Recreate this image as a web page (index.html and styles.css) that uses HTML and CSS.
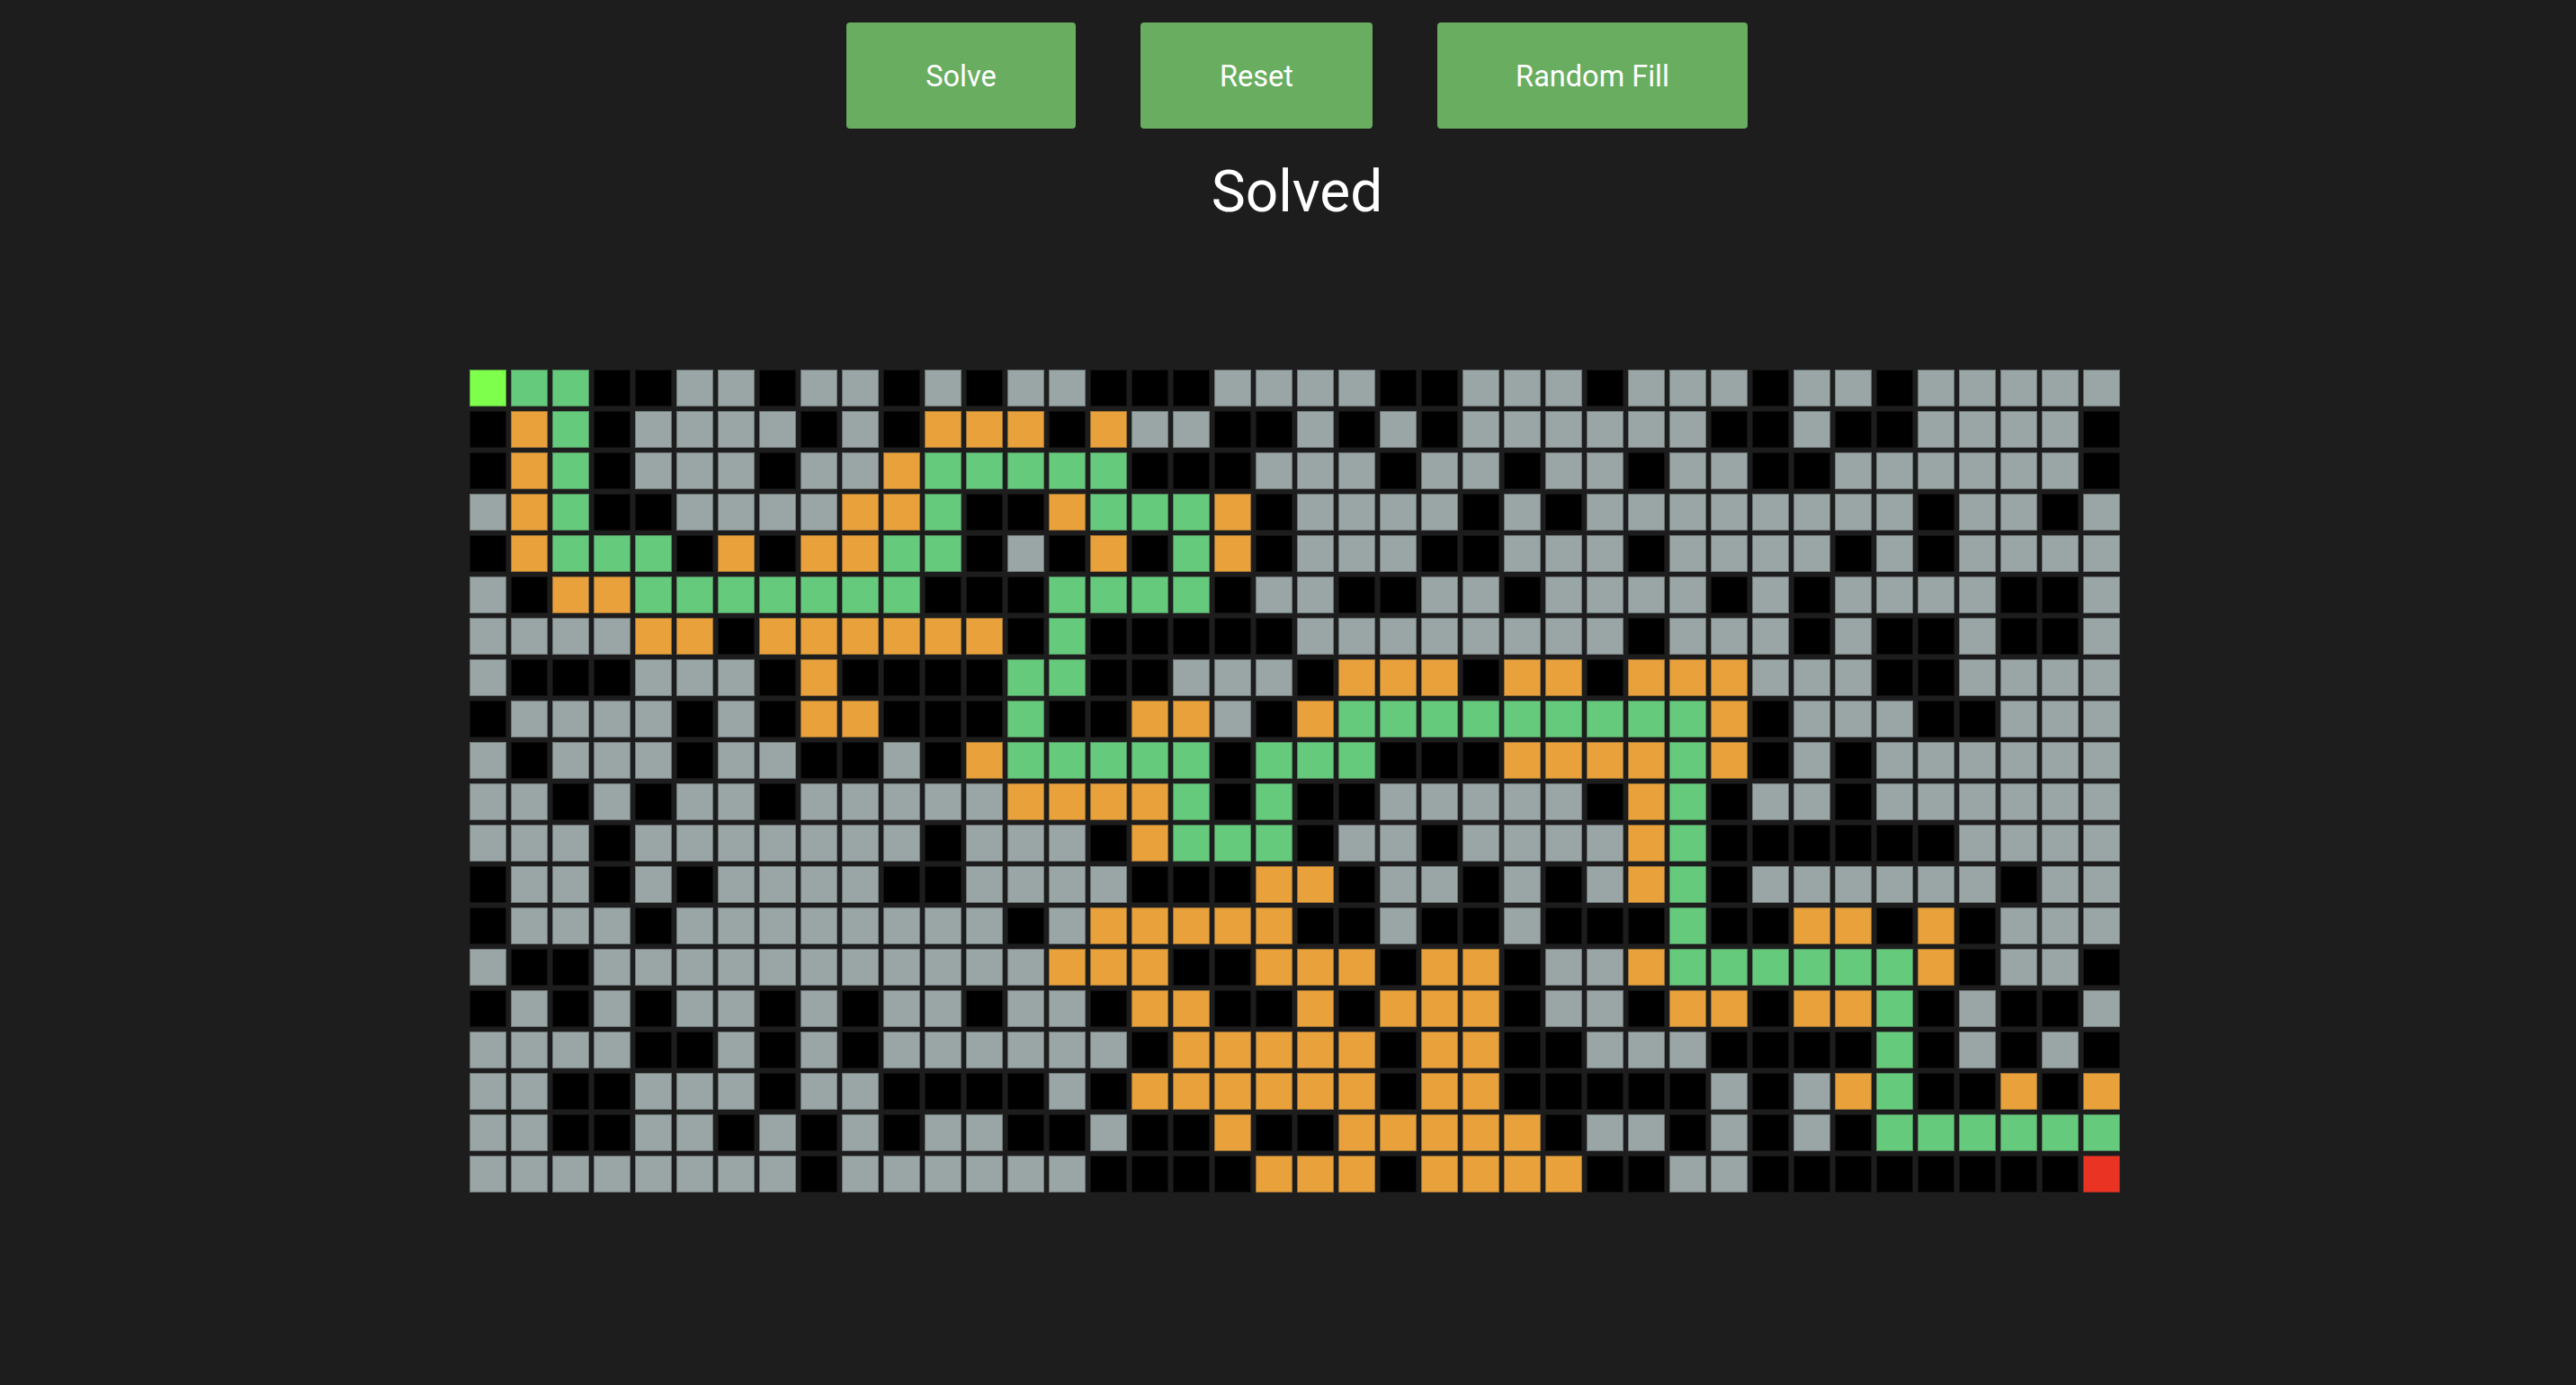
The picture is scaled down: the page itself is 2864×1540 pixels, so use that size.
FILE: index.html
```html
<!DOCTYPE html>
<html lang="en">
<head>
<meta charset="utf-8">
<title>Maze Solver</title>
<link rel="stylesheet" href="styles.css">
</head>
<body>
<main class="app">
  <div class="controls">
    <button class="btn btn-solve">Solve</button>
    <button class="btn btn-reset">Reset</button>
    <button class="btn btn-fill">Random Fill</button>
  </div>
  <h1 class="status">Solved</h1>
  <div class="grid" id="grid"></div>
</main>
<script src="app.js"></script>
</body>
</html>
```

FILE: styles.css
```css
* { box-sizing: border-box; }
html, body { margin: 0; height: 100%; }
body {
  background: #1d1d1d;
  color: #fff;
  font-family: Roboto, "Liberation Sans", sans-serif;
  overflow: hidden;
}
.app {
  display: flex;
  flex-direction: column;
  align-items: center;
  padding-top: 25px;
}
.controls {
  display: flex;
  gap: 72px;
  margin-left: 20px;
}
.btn {
  height: 118px;
  padding: 2px 0 0;
  border: 0;
  border-radius: 4px;
  background: #69ad60;
  color: #fff;
  font: 400 32.5px Roboto, sans-serif;
}
.btn-solve { width: 255px; }
.btn-reset { width: 258px; }
.btn-fill { width: 345px; }
.status {
  margin: 33px 0 0 20px;
  font-weight: 400;
  font-size: 64px;
  line-height: 76px;
}
.grid {
  display: grid;
  grid-template-columns: repeat(40, 41px);
  grid-auto-rows: 41px;
  gap: 5px;
  margin-top: 159px;
  margin-left: 15px;
}
.cell { border: 1px solid rgba(40, 40, 40, 0.4); }
.wall { background: #000; border-color: #111; }
.open { background: #9aa5a6; }
.visited { background: #e8a13b; }
.path { background: #66ca7d; }
.start { background: #7dff4c; }
.end { background: #ea3323; }
```

FILE: app.js
```js
var rows = [
  "SGG..gg.gg.g.gg...gg" + "gg..ggg.ggg.gg.ggggg",
  ".oG.gggg.g.ooo.ogg.." + "g.g.gggggg..g..gggg.",
  ".oG.ggg.ggoGGGGG...g" + "gg.gg.gg.gg..gggggg.",
  "goG..ggggooG..oGGGo." + "gggg.g.gggggggg.gg.g",
  ".oGGG.o.ooGG.g.o.Go." + "ggg..ggg.gggg.g.gggg",
  "g.ooGGGGGGG...GGGG.g" + "g..gg.gggg.g.gggg..g",
  "ggggoo.oooooo.G....." + "gggggggg.ggg.g..g..g",
  "g...ggg.o....GG..ggg" + ".ooo.oo.oooggg..gggg",
  ".gggg.g.oo...G..oog." + "oGGGGGGGGGo.ggg..ggg",
  "g.ggg.gg..g.oGGGGG.G" + "GG...ooooGo.g.gggggg",
  "gg.g.gg.gggggooooG.G" + "..ggggg.oG.gg.gggggg",
  "ggg.ggggggg.ggg.oGGG" + ".gg.ggggoG......gggg",
  ".gg.g.gggg..gggg...o" + "o.gg.g.goG.gggggg.gg",
  ".ggg.gggggggg.gooooo" + "..g..g...G..oo.o.ggg",
  "g..gggggggggggooo..o" + "oo.oo.ggoGGGGGGo.gg.",
  ".g.g.gg.g.gg.gg.oo.." + "o.ooo.gg.oo.ooG.g..g",
  "gggg..g.g.gggggg.ooo" + "oo.oo..ggg....G.g.g.",
  "gg..ggg.gg....g.oooo" + "oo.oo.....g.goG..o.o",
  "gg..gg.g.g.gg..g..o." + ".ooooo.gg.g.g.GGGGGG",
  "gggggggg.gggggg....o" + "oo.oooo..gg........E"
];
var names = { ".": "wall", g: "open", o: "visited", G: "path", S: "start", E: "end" };
var grid = document.getElementById("grid");
rows.forEach(function (row) {
  for (var i = 0; i < 40; i++) {
    var cell = document.createElement("div");
    cell.className = "cell " + names[row.charAt(i)];
    grid.appendChild(cell);
  }
});
```
